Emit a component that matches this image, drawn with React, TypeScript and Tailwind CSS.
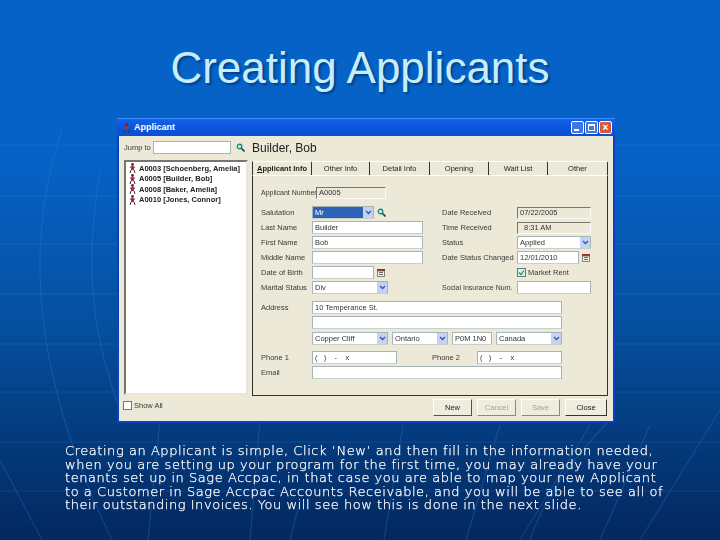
import React from 'react';

const applicants = [
  'A0003 [Schoenberg, Amelia]',
  'A0005 [Builder, Bob]',
  'A0008 [Baker, Amelia]',
  'A0010 [Jones, Connor]',
];

const tabs = [
  { label: 'pplicant Info', width: 'w-[60px]', active: true },
  { label: 'Other Info', width: 'w-[58px]' },
  { label: 'Detail Info', width: 'w-[60px]' },
  { label: 'Opening', width: 'w-[59px]' },
  { label: 'Wait List', width: 'w-[59px]' },
  { label: 'Other', width: 'w-[60px]' },
];

const Person = () => (
  <svg width="7" height="10" viewBox="0 0 7 10" className="shrink-0">
    <circle cx="3.5" cy="1.5" r="1.4" fill="#7a1f2e" />
    <path d="M0.5 4 L3.5 2.8 L6.5 4 L5 5 L5 7 L2 7 L2 5 Z" fill="#a0304a" />
    <path d="M2 7 L1 10 M5 7 L6 10" stroke="#333" strokeWidth="1" />
  </svg>
);

const Search = () => (
  <svg width="9" height="9" viewBox="0 0 9 9" className="shrink-0">
    <circle cx="3.5" cy="3.5" r="2.3" fill="#bfeee0" stroke="#0f7f6a" strokeWidth="1.2" />
    <path d="M5.5 5.5 L8.5 8.5" stroke="#17483f" strokeWidth="1.6" />
  </svg>
);

const Calendar = () => (
  <svg width="8" height="8" viewBox="0 0 8 8" className="shrink-0">
    <rect x="0" y="0" width="8" height="2" fill="#9a2a2a" />
    <rect x="0.5" y="2" width="7" height="5.5" fill="#f4f0e4" stroke="#6b6b60" strokeWidth="0.8" />
    <path d="M2 3.5 H6 M2 5.5 H6" stroke="#444" strokeWidth="0.8" />
  </svg>
);

const Label = ({ children, className = '' }: { children?: React.ReactNode; className?: string }) => (
  <span className={`text-[7.5px] leading-none text-[#3a3a36] whitespace-nowrap shrink-0 ${className}`}>{children}</span>
);

const Field = ({ value = '', className = '' }: { value?: string; className?: string }) => (
  <div className={`h-[13px] bg-white border border-[#a5b5b5] border-b-[#c8d0cc] px-[2px] text-[7.5px] leading-[11px] text-[#333] overflow-hidden whitespace-nowrap shrink-0 ${className}`}>
    {value}
  </div>
);

const ReadOnly = ({ value, className = '' }: { value: string; className?: string }) => (
  <div className={`h-[12px] bg-[#ece9d8] border border-[#77776c] border-r-[#fbfaf5] border-b-[#fbfaf5] px-[2px] text-[7.5px] leading-[10px] text-[#333] whitespace-nowrap shrink-0 ${className}`}>
    {value}
  </div>
);

const Combo = ({ value, className = '', selected = false }: { value: string; className?: string; selected?: boolean }) => (
  <div className={`h-[13px] flex border border-[#a5b5b5] border-b-[#c8d0cc] bg-white text-[7.5px] leading-[11px] text-[#333] shrink-0 ${className}`}>
    <span className={`flex-1 px-[2px] overflow-hidden whitespace-nowrap ${selected ? 'bg-[#2f63b8] text-white' : ''}`}>{value}</span>
    <span className="w-[10px] bg-[#c3d2f5] flex items-center justify-center">
      <svg width="7" height="5" viewBox="0 0 7 5">
        <path d="M1 1 L3.5 3.5 L6 1" fill="none" stroke="#3a5a96" strokeWidth="1.4" />
      </svg>
    </span>
  </div>
);

const Row = ({ children, className = '' }: { children?: React.ReactNode; className?: string }) => (
  <div className={`h-[13px] flex items-center shrink-0 ${className}`}>{children}</div>
);

const Left = ({ label, children }: { label: string; children?: React.ReactNode }) => (
  <div className="w-[181px] flex items-center shrink-0">
    <Label className="w-[51px]">{label}</Label>
    {children}
  </div>
);

const WinButton = ({ label, disabled = false, className = '' }: { label: string; disabled?: boolean; className?: string }) => (
  <div className={`h-[17px] flex items-center justify-center text-[7.5px] border-r border-b shrink-0 ${disabled ? 'text-[#a5a294] border-[#8c8a7c]' : 'text-[#222] border-[#55544c]'} bg-[#efeddf] border-t border-l border-t-white border-l-white ${className}`}>
    {label}
  </div>
);

const ApplicantWindow = () => (
  <div className="relative ml-[117px] self-start w-[498px] h-[305px] flex flex-col bg-[#ece9d8] border-l-[2px] border-r-[2px] border-b-[2px] border-[#0d3fc4] shrink-0 font-['Liberation_Sans',sans-serif]">
    {/* title bar */}
    <div className="h-[18px] -mx-[2px] flex items-center pl-[6px] pr-[3px] bg-gradient-to-b from-[#1463ea] via-[#0a55dc] to-[#0b50d2] border-t border-[#3d8bff] shrink-0">
      <Person />
      <span className="ml-[4px] text-[9px] font-bold text-white">Applicant</span>
      <div className="ml-auto flex gap-[1px]">
        <div className="w-[13px] h-[13px] rounded-[2px] border border-white bg-[#3f78e0] flex items-end pl-[2px] pb-[2px]">
          <div className="w-[5px] h-[2px] bg-white" />
        </div>
        <div className="w-[13px] h-[13px] rounded-[2px] border border-white bg-[#3f78e0] p-[2px]">
          <div className="w-full h-full border border-white border-t-2" />
        </div>
        <div className="w-[13px] h-[13px] rounded-[2px] border border-white bg-[#d9583a] flex items-center justify-center text-white text-[10px] font-bold leading-none">×</div>
      </div>
    </div>

    <div className="flex flex-1 min-h-0 blur-[0.3px]">
      {/* left column */}
      <div className="w-[133px] flex flex-col pl-[5px] shrink-0">
        <div className="h-[15px] mt-[4px] flex items-center shrink-0">
          <Label className="w-[29px]">Jump to</Label>
          <div className="w-[78px] h-[13px] bg-white border border-[#a5b5b5]" />
          <span className="ml-[5px]"><Search /></span>
        </div>
        <div className="w-[124px] h-[235px] mt-[5px] bg-white border-2 border-[#77766c] border-r-[#e8e6da] border-b-[#e8e6da] pt-[1px] pl-[3px] shrink-0">
          {applicants.map((a) => (
            <div key={a} className="h-[10.5px] flex items-center gap-[3px]">
              <Person />
              <span className="text-[7.5px] leading-none font-bold text-[#222] whitespace-nowrap">{a}</span>
            </div>
          ))}
        </div>
        <div className="mt-[6px] -ml-[1px] flex items-center gap-[2px]">
          <div className="w-[9px] h-[9px] bg-white border border-[#5d7a96]" />
          <Label>Show All</Label>
        </div>
      </div>

      {/* right column */}
      <div className="flex-1 flex flex-col min-w-0">
        <div className="h-[24px] flex items-center shrink-0">
          <span className="text-[12px] text-[#222] leading-none mt-[-1px]">Builder, Bob</span>
        </div>
        <div className="flex h-[14px] shrink-0 mt-[1px]">
          {tabs.map((t) => (
            <div key={t.label} className={`${t.width} flex items-center justify-center text-[7.5px] leading-none text-[#222] whitespace-nowrap border-r border-t border-[#33332c] border-t-white rounded-tr-[2px] ${t.active ? 'font-bold border-l border-l-[#33332c]' : ''}`}>
              {t.active ? <span><span className="underline">A</span>{t.label}</span> : t.label}
            </div>
          ))}
        </div>

        {/* tab panel */}
        <div className="w-[356px] h-[221px] flex flex-col pl-[8px] bg-[#ece9d8] border border-[#33332c] border-t-white shrink-0">
          <Row className="mt-[10px]">
            <Label className="w-[55px] text-[7px]">Applicant Number</Label>
            <ReadOnly value="A0005" className="w-[70px]" />
          </Row>
          <Row className="mt-[7px]">
            <Left label="Salutation">
              <Combo value="Mr" selected className="w-[62px]" />
              <span className="ml-[3px]"><Search /></span>
            </Left>
            <Label className="w-[75px]">Date Received</Label>
            <ReadOnly value="07/22/2005" className="w-[74px]" />
          </Row>
          <Row className="mt-[2px]">
            <Left label="Last Name"><Field value="Builder" className="w-[111px]" /></Left>
            <Label className="w-[75px]">Time Received</Label>
            <ReadOnly value="8:31 AM" className="w-[74px] pl-[6px]" />
          </Row>
          <Row className="mt-[2px]">
            <Left label="First Name"><Field value="Bob" className="w-[111px]" /></Left>
            <Label className="w-[75px]">Status</Label>
            <Combo value="Applied" className="w-[74px]" />
          </Row>
          <Row className="mt-[2px]">
            <Left label="Middle Name"><Field className="w-[111px]" /></Left>
            <Label className="w-[75px]">Date Status Changed</Label>
            <Field value="12/01/2010" className="w-[62px]" />
            <span className="ml-[3px]"><Calendar /></span>
          </Row>
          <Row className="mt-[2px]">
            <Left label="Date of Birth">
              <Field className="w-[62px]" />
              <span className="ml-[3px]"><Calendar /></span>
            </Left>
            <div className="w-[75px] shrink-0" />
            <div className="w-[9px] h-[9px] bg-[#dff0e4] border border-[#4f7f8f] flex items-center justify-center shrink-0">
              <svg width="7" height="7" viewBox="0 0 7 7">
                <path d="M1 3.5 L3 5.5 L6 1.5" fill="none" stroke="#2c8a3c" strokeWidth="1.2" />
              </svg>
            </div>
            <Label className="ml-[2px]">Market Rent</Label>
          </Row>
          <Row className="mt-[2px]">
            <Left label="Marital Status"><Combo value="Div" className="w-[76px]" /></Left>
            <Label className="w-[75px] text-[7px]">Social Insurance Num.</Label>
            <Field className="w-[74px]" />
          </Row>
          <Row className="mt-[7px]">
            <Label className="w-[51px]">Address</Label>
            <Field value="10 Temperance St." className="w-[250px]" />
          </Row>
          <Row className="mt-[2px] pl-[51px]">
            <Field className="w-[250px]" />
          </Row>
          <Row className="mt-[3px] pl-[51px] gap-[4px]">
            <Combo value="Copper Cliff" className="w-[76px]" />
            <Combo value="Ontario" className="w-[56px]" />
            <Field value="P0M 1N0" className="w-[40px]" />
            <Combo value="Canada" className="w-[66px]" />
          </Row>
          <Row className="mt-[6px]">
            <Label className="w-[51px]">Phone 1</Label>
            <Field value="(   )    -    x" className="w-[85px] whitespace-pre" />
            <Label className="w-[80px] pl-[35px]">Phone 2</Label>
            <Field value="(   )    -    x" className="w-[85px] whitespace-pre" />
          </Row>
          <Row className="mt-[2px]">
            <Label className="w-[51px]">Email</Label>
            <Field className="w-[250px]" />
          </Row>
        </div>

        <div className="flex ml-[181px] mt-[3px] gap-[5px]">
          <WinButton label="New" className="w-[39px]" />
          <WinButton label="Cancel" disabled className="w-[39px]" />
          <WinButton label="Save" disabled className="w-[39px]" />
          <WinButton label="Close" className="w-[42px] border-l-[#33332c] border-t-[#33332c] border-r-[#33332c] border-b-[#33332c]" />
        </div>
      </div>
    </div>
  </div>
);

export default function App() {
  return (
    <div className="relative w-[720px] h-[540px] overflow-hidden flex flex-col bg-gradient-to-b from-[#0662c6] from-30% via-[#05509f] via-60% to-[#03285f]">
      {/* faint background strokes */}
      <svg className="absolute inset-0" width="720" height="540" viewBox="0 0 720 540" fill="none" stroke="#3f8ae6" strokeWidth="1.2">
        <g opacity="0.25">
          <path d="M0 145 H720 M0 196 H720 M0 244 H720 M0 294 H720 M0 344 H720" />
          <path d="M0 392 H720 M0 442 H720 M0 491 H720" opacity="0.8" />
          <path d="M62 130 C25 240 30 370 112 540" />
          <path d="M100 170 C85 260 90 330 120 410" />
          <path d="M0 460 L42 540" />
          <path d="M160 420 L148 540 M260 420 L250 540 M300 500 L290 540" />
          <path d="M403 425 L384 540 M500 425 L466 540 M590 425 L520 540 M650 425 L600 540 M720 410 L640 540" />
          <path d="M610 420 C560 470 540 510 530 540" />
        </g>
      </svg>

      <div className="relative h-[118px] shrink-0 flex items-start justify-center pt-[46px]">
        <h1 className="text-[44px] leading-none text-[#c6edfb] [text-shadow:2px_2px_2px_#03418c] font-['Liberation_Sans',sans-serif]">
          Creating Applicants
        </h1>
      </div>

      <ApplicantWindow />

      <p className="relative ml-[65px] mt-[21px] text-[13px] leading-[13.5px] tracking-[0.55px] font-light [-webkit-text-stroke:0.25px_#ffffff] text-white whitespace-nowrap font-['DejaVu_Sans',sans-serif]">
        Creating an Applicant is simple, Click ‘New’ and then fill in the information needed,<br />
        when you are setting up your program for the first time, you may already have your<br />
        tenants set up in Sage Accpac, in that case you are able to map your new Applicant<br />
        to a Customer in Sage Accpac Accounts Receivable, and you will be able to see all of<br />
        their outstanding Invoices. You will see how this is done in the next slide.
      </p>
    </div>
  );
}
